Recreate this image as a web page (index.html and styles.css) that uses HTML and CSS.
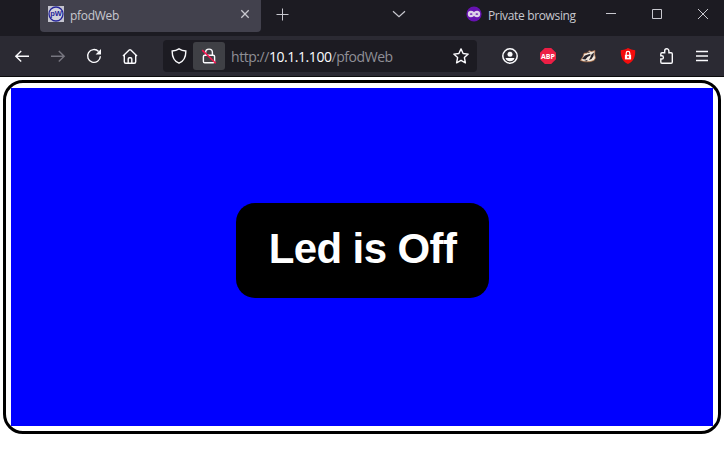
FILE: index.html
```
<!DOCTYPE html>
<html lang="en">
<head>
<meta charset="utf-8">
<title>pfodWeb</title>
<link rel="stylesheet" href="styles.css">
</head>
<body>
<header class="titlebar">
  <div class="tab">
    <svg class="favicon" viewBox="0 0 16 16"><rect width="16" height="16" fill="#c4c4ce"/><circle cx="8" cy="8" r="7" fill="#d2d2dc" stroke="#25259a" stroke-width="1.3"/><text class="favicon-text" x="8" y="10.2" text-anchor="middle">pW</text></svg>
    <span class="tab-title">pfodWeb</span>
    <svg class="icon tab-close" viewBox="0 0 16 16"><path d="M4.3 4.3l7.4 7.4M11.7 4.3l-7.4 7.4" stroke-width="1.3"/></svg>
  </div>
  <svg class="icon new-tab" viewBox="0 0 16 16"><path d="M8.5 2.5v12M2.5 8.5h12"/></svg>
  <svg class="icon tab-list" viewBox="0 0 16 16"><path d="M2 5.2l6 5.5 6-5.5" stroke-width="1.2"/></svg>
  <svg class="icon private-icon" viewBox="0 0 16 16"><circle cx="8" cy="8" r="7.6" fill="#6612b0" stroke="none"/><path d="M1.8 8C1.8 4.3 5.6 4 8 6c2.400-2 6.200-1.700 6.200 2s-3.800 4-6.200 2c-2.400 2-6.200 1.700-6.200-2z" fill="#dcd1e8" stroke="none"/><path d="M3.700 8q1.400-1.700 3 0-1.600 1.700-3 0zM12.300 8q-1.400-1.700-3 0 1.600 1.700 3 0z" fill="#6612b0" stroke="none"/></svg>
  <span class="private-label">Private browsing</span>
  <div class="window-controls">
    <svg class="icon" viewBox="0 0 16 16"><path d="M3 7.5h10"/></svg>
    <svg class="icon" viewBox="0 0 16 16"><path d="M3.5 3.5h9v9h-9z"/></svg>
    <svg class="icon" viewBox="0 0 16 16"><path d="M3 3l10 10M13 3L3 13"/></svg>
  </div>
</header>
<nav class="toolbar">
  <div class="nav-buttons">
    <svg class="icon" viewBox="0 0 16 16"><path d="M15 8.300H1.800M7.200 3L1.800 8.300l5.400 5.300"/></svg>
    <svg class="icon disabled" viewBox="0 0 16 16"><path d="M1 8.300h13.200M8.800 3l5.400 5.300-5.400 5.300"/></svg>
    <svg class="icon" viewBox="0 0 16 16"><path d="M12.600 3.500A6.400 6.400 0 1 0 14.400 8.300"/><path d="M15 1v5.500H9.600z" fill="#fbfbfe" stroke="none"/></svg>
    <svg class="icon" viewBox="0 0 16 16"><path d="M1 8l6.200-6q.8-.7 1.600 0L15 8M2.300 7.100v6.600q0 1.500 1.500 1.500h8.400q1.500 0 1.500-1.500V7.100M6.200 15v-4q0-1.200 1.200-1.200h1.200q1.200 0 1.200 1.200v4"/></svg>
  </div>
  <div class="address">
    <svg class="icon shield" viewBox="0 0 16 16"><path d="M8 .8q3 1.900 6.800 2.200c.2 6-1.500 10-6.800 12.200C2.700 13 1 9 1.200 3 5 2.700 8 .8 8 .8z"/></svg>
    <span class="security">
      <svg class="icon" viewBox="0 0 16 16"><path d="M4.600 7V4.500a3.400 3.400 0 0 1 6.800 0V7M3.800 7.200h8.400q1.400 0 1.400 1.400v4.800q0 1.400-1.400 1.400H3.800q-1.400 0-1.400-1.400V8.600q0-1.400 1.400-1.400z"/><path d="M1.200 2.100l13.600 13.200" stroke="#f51651" stroke-width="1.600"/></svg>
    </span>
    <span class="url">http://<span class="host">10.1.1.100</span>/pfodWeb</span>
    <svg class="icon star" viewBox="0 0 16 16"><path d="M8 .9l2.100 4.600 5.100.6-3.800 3.500 1 5.200L8 12.300l-4.400 2.500 1-5.200L.8 6.100l5.100-.6z" stroke-linejoin="round"/></svg>
  </div>
  <div class="extensions">
    <svg class="icon account" viewBox="0 0 16 16"><circle cx="8" cy="8" r="7.200" stroke-width="1.500"/><circle cx="8" cy="6.200" r="2.500" fill="#fbfbfe" stroke="none"/><path d="M3.500 10h9q-1 3.300-4.500 3.300T3.500 10z" fill="#fbfbfe" stroke="none"/></svg>
    <svg class="icon adblock" viewBox="0 0 16 16"><path d="M4.800 0h6.400L16 4.800v6.400L11.200 16H4.800L0 11.200V4.800z" fill="#ed1e45" stroke="none"/><text class="adblock-text" x="8" y="10.700" text-anchor="middle" textLength="14" lengthAdjust="spacingAndGlyphs">ABP</text></svg>
    <svg class="icon badger" viewBox="0 0 16 16"><path d="M.5 12.500L3 8.500l1-3.200L7 5l2-2.300 2.500.8 3.500-1-.4 3.500.9 4-1.500 2.500-4 1.200-5 .1z" fill="#f1e9df" stroke="#ad653a" stroke-width=".7"/><path d="M2 11l3-3.500L9.500 6l1.500 1-3.500 2L5.500 11.500zM11.500 6.500l2.500-2-.5 3.500-2 3-2.500 1 1.500-3zM7 5l2-1.500 1 1zM4 13l4-1.200-1.500 1.700z" fill="#25222a" stroke="none"/></svg>
    <svg class="icon redshield" viewBox="0 0 16 16"><path d="M8 0q3 2 7.200 2.300c.3 6.600-1.500 11.200-7.200 13.700C2.300 13.500.5 8.900.8 2.300 5 2 8 0 8 0z" fill="#f40c0c" stroke="none"/><path d="M6.200 7V5.200a1.800 1.800 0 0 1 3.600 0V7" stroke="#fff" stroke-width="1.200"/><rect x="4.900" y="6.800" width="6.200" height="4.600" fill="#fff" stroke="none"/><path d="M8 8v2" stroke="#f40c0c"/></svg>
    <svg class="icon puzzle" viewBox="0 0 16 16"><path d="M4 15.200h9.100q1.200 0 1.200-1.200V5.900q0-1.200-1.200-1.200h-2.200V2.900a2.100 2.100 0 0 0-4.200 0v1.800H4q-1.200 0-1.200 1.200v1.900h1a1.600 1.600 0 0 1 0 3.200h-1v3q0 1.200 1.200 1.200z"/></svg>
    <svg class="icon menu" viewBox="0 0 16 16"><path d="M2 3.500h12M2 8h12M2 12.500h12"/></svg>
  </div>
</nav>
<main class="page">
  <div class="frame">
    <div class="canvas"><button class="led" type="button">Led is Off</button></div>
  </div>
</main>
</body>
</html>
```
FILE: styles.css
```
* { box-sizing: border-box; }
body {
  margin: 0;
  height: 450px;
  display: flex;
  flex-direction: column;
  overflow: hidden;
  background: #fff;
  color: #fbfbfe;
  font-family: "Open Sans", "Noto Sans", sans-serif;
}
svg { display: block; flex: none; width: 16px; height: 16px; }
.icon { fill: none; stroke: #fbfbfe; stroke-width: 1.4; }
.titlebar {
  flex: none;
  height: 36px;
  padding-left: 40px;
  display: flex;
  align-items: flex-start;
  background: #1c1b22;
  font-size: 12px;
  color: #c8c8cf;
}
.titlebar .icon { stroke: #c8c8cf; stroke-width: 1; margin-top: 6px; }
.tab {
  width: 221px;
  height: 32px;
  padding: 0 8px;
  display: flex;
  background: #42414d;
  border-radius: 0 0 4px 4px;
}
.favicon { margin-top: 6px; }
.favicon-text { font: bold 7.5px "Liberation Sans", sans-serif; fill: #25259a; }
.tab-title { margin-left: 6px; line-height: 31px; letter-spacing: -.3px; }
.tab .tab-close { margin-left: auto; }
.new-tab { margin-left: 13px; }
.tab-list { margin-left: 101px; }
.private-icon { margin-left: 59px; }
.private-label { margin-left: 6px; width: 88px; line-height: 31px; white-space: nowrap; letter-spacing: -.35px; }
.window-controls { display: flex; gap: 30px; margin-left: 27px; }
.toolbar {
  flex: none;
  height: 41px;
  display: flex;
  padding: 4px 0 4px 14px;
  background: #2b2a33;
  border-bottom: 1px solid #0c0c0d;
}
.nav-buttons { display: flex; align-items: center; gap: 20px; }
.disabled { stroke: #777680; }
.address {
  margin-left: 25px;
  width: 314px;
  height: 32px;
  padding: 0 8px;
  display: flex;
  align-items: center;
  background: #1c1b22;
  border-radius: 4px;
}
.security {
  width: 32px;
  height: 28px;
  margin: 0 6px;
  display: grid;
  place-items: center;
  background: #3f4045;
  border-radius: 3px;
}
.url { font-size: 14px; line-height: 32px; padding-top: 2px; color: #8f8f96; letter-spacing: -.45px; white-space: nowrap; }
.host { color: #fbfbfe; }
.star { margin-left: auto; }
.extensions { display: flex; align-items: center; margin-left: 25px; }
.adblock { margin-left: 22px; }
.adblock-text { font: bold 7.5px "Open Sans", sans-serif; fill: #fff; stroke: none; }
.badger, .redshield { margin-left: 24px; }
.puzzle { margin-left: 22px; }
.menu { margin-left: 20px; }
.page { flex: 1; padding: 3px; }
.frame {
  height: 354px;
  padding: 5px;
  border: 3px solid #000;
  border-radius: 20px;
}
.canvas {
  width: 702px;
  height: 338px;
  display: grid;
  place-items: center;
  background: #00f;
}
.led {
  width: 253px;
  height: 95px;
  padding: 0 0 4px 1px;
  margin-bottom: 13px;
  border: 0;
  border-radius: 19px;
  background: #000;
  color: #fff;
  font: bold 42px/90px "Liberation Sans", sans-serif;
  letter-spacing: -.6px;
}
```
